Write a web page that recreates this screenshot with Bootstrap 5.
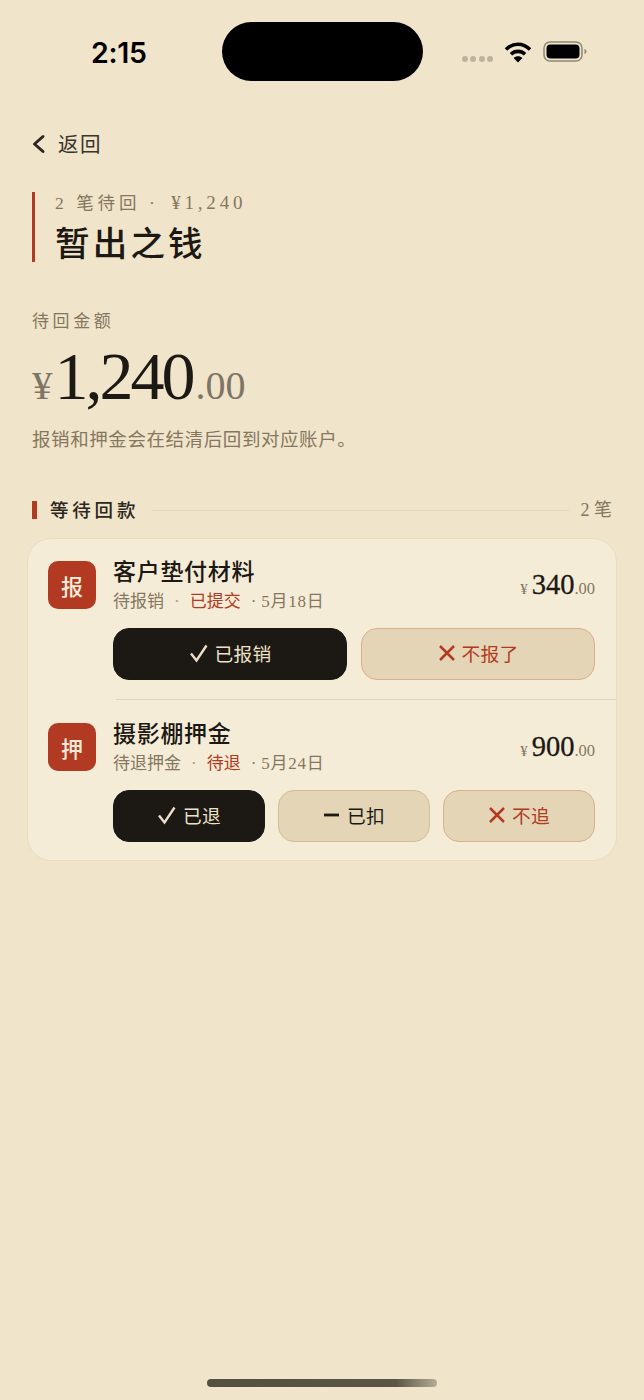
<!doctype html>
<html lang="zh">
<head>
<meta charset="utf-8">
<title>暂出之钱</title>
<link href="https://cdn.jsdelivr.net/npm/bootstrap@5.3.0/dist/css/bootstrap.min.css" rel="stylesheet">
<style>
:root{--cjk:"Noto Sans CJK SC",sans-serif;--ser:"Liberation Serif","Noto Sans CJK SC",serif;--ink:#1c1813;--mut:#7d7260;--red:#b23a22;}
html,body{background:#f0e4ca;}
body{width:644px;height:1400px;overflow:hidden;font-family:var(--cjk);color:var(--ink);position:relative;}
.sbar{height:82px;padding-top:22px;}
.clock{width:222px;padding-left:91px;font:600 28.5px/61px Inter,sans-serif;letter-spacing:-.3px;color:#000;}
.island{width:201px;height:59px;border-radius:30px;background:#000;}
.stat{margin-left:39px;gap:11px;padding-top:19px;}
.dots{gap:2.3px;padding-top:13px;}
.dots i{width:6px;height:6px;border-radius:50%;background:#bdb39d;display:block;}
.back{margin:37px 0 0 32px;height:49px;gap:12px;font-size:20.5px;letter-spacing:1.500px;color:#3a342a;}
.hero{margin:24px 0 0 32px;border-left:3px solid var(--red);padding-left:20px;height:70px;}
.eyebrow{font-family:var(--ser);font-size:17.5px;line-height:22px;letter-spacing:4px;color:#85775f;white-space:nowrap;}
.eyebrow .sum{font-size:19px;letter-spacing:3.800px;margin-left:4px;}
.ttl{font-size:34.5px;line-height:48px;font-weight:500;letter-spacing:3.200px;margin:3px 0 0;}
.lbl{margin:45px 0 0 32px;font-size:17px;line-height:26px;letter-spacing:3.600px;color:#85775f;}
.big{margin:7px 0 0 32px;height:72px;font-family:var(--ser);line-height:72px;white-space:nowrap;}
.big .yen{font-size:41px;color:#7d7566;margin-right:2px;}
.big .num{font-size:68px;letter-spacing:-3px;color:var(--ink);}
.big .dec{font-size:40px;color:#7d7566;margin-left:3px;}
.note{margin:12px 0 0 32px;font-size:18.5px;line-height:28px;letter-spacing:.58px;color:#85775f;}
.sect{margin:43px 32px 0 32px;height:30px;}
.sect .tick{width:5px;height:18px;background:var(--red);margin-right:13px;}
.sect .nm{font-size:18.5px;letter-spacing:3.800px;font-weight:500;color:#2c2720;}
.sect .rule{height:1px;background:#e4d8bd;margin:0 12px 0 13px;}
.sect .cnt{font-family:var(--ser);font-size:18px;color:#85775f;}
.panel{margin:13px 27px 0 27px;height:323px;background:#f5ecd7;border:1px solid #e8dcc2;border-radius:24px;}
.entry{padding:22px 21px 0 20px;height:160px;}
.glyph{width:48px;height:48px;border-radius:10px;background:var(--red);color:#f5ecd7;font-size:22px;font-weight:500;}
.bodyc{margin-left:17px;}
.nm2{font-size:23px;line-height:30px;letter-spacing:.7px;font-weight:500;margin-top:-6px;}
.meta{font-size:17px;line-height:26px;height:26px;color:#85775f;margin-top:2px;white-space:nowrap;}
.meta .st{color:var(--red);}
.meta .sep{font-family:var(--ser);margin:0 10px;color:#a89c85;}
.meta .dt{font-family:var(--ser);letter-spacing:.8px;margin-left:10px;}
.meta .dt b{font-weight:400;margin-right:4px;}
.amt{font-family:var(--ser);white-space:nowrap;margin-top:6px;line-height:36px;}
.amt .y{font-size:15px;color:#7d7566;margin-right:4px;}
.amt .n{font-size:28.5px;color:var(--ink);-webkit-text-stroke:.3px var(--ink);}
.amt .c{font-size:16.5px;color:#85775f;}
.acts{gap:14px;margin-top:15px;margin-left:65px;}
.acts.tri{gap:13px;}
.pbtn{flex:1 1 0;min-width:0;height:52px;padding:0 0 2px;border-radius:16px;font-size:18.7px;letter-spacing:.3px;gap:6px;display:flex;align-items:center;justify-content:center;}
.pbtn.fill{background:var(--ink);border:1px solid var(--ink);color:#ece1c8;}
.pbtn.soft{background:#e3d5b5;border:1px solid #cfbfa0;color:var(--ink);}
.pbtn.warn{background:#e3d5b5;border:1px solid #dcae8f;color:var(--red);}
.split{height:1px;background:#dfd3b9;margin:0 0 0 88px;}
.entry.two{height:161px;padding-top:23px;}
.home{width:230px;height:8px;border-radius:4px;background:linear-gradient(90deg,#54503f 0,#5a5545 82%,#b5ac96 100%);position:absolute;left:207px;top:1379px;}
</style>
</head>
<body>
<div class="sbar d-flex align-items-start">
  <div class="clock">2:15</div>
  <div class="island flex-shrink-0"></div>
  <div class="stat d-flex align-items-center">
    <div class="dots d-flex"><i></i><i></i><i></i><i></i></div>
    <svg width="28" height="22" viewBox="0 0 28 22" fill="none" stroke="#000" stroke-width="3.6"><path d="M2 8.5C9 1.5 19 1.500 26 8.5"/><path d="M7 13.200C11 9.400 17 9.400 21 13.200"/><path d="M14 21.500L9.600 17C12 14.700 16 14.700 18.400 17Z" fill="#000" stroke="none"/></svg>
    <svg width="44" height="22" viewBox="0 0 44 22"><rect x="1" y="1" width="38" height="19" rx="6" fill="none" stroke="#8e8775" stroke-width="1.500"/><rect x="3.500" y="3.500" width="33" height="14" rx="4" fill="#000"/><path d="M41.500 8v5c1.500-.5 2-1.500 2-2.500s-.5-2-2-2.500z" fill="#8e8775"/></svg>
  </div>
</div>
<div class="back d-flex align-items-center">
  <svg width="14" height="22" viewBox="0 0 14 22" fill="none" stroke="#2c2720" stroke-width="3" stroke-linecap="round" stroke-linejoin="round"><path d="M11 3.500L2.500 11l8.500 7.500"/></svg>
  <span>返回</span>
</div>
<div class="hero">
  <div class="eyebrow">2 笔待回 · <span class="sum">¥1,240</span></div>
  <h1 class="ttl">暂出之钱</h1>
</div>
<div class="lbl">待回金额</div>
<div class="big"><span class="yen">¥</span><span class="num">1,240</span><span class="dec">.00</span></div>
<div class="note">报销和押金会在结清后回到对应账户。</div>
<div class="sect d-flex align-items-center">
  <div class="tick"></div><div class="nm">等待回款</div><div class="rule flex-grow-1"></div><div class="cnt">2 笔</div>
</div>
<div class="panel">
  <div class="entry">
    <div class="d-flex">
      <div class="glyph d-flex align-items-center justify-content-center flex-shrink-0">报</div>
      <div class="bodyc flex-grow-1">
        <div class="nm2">客户垫付材料</div>
        <div class="meta">待报销<span class="sep">·</span><span class="st">已提交</span><span class="dt"><b>·</b>5月18日</span></div>
      </div>
      <div class="amt"><span class="y">¥</span><span class="n">340</span><span class="c">.00</span></div>
    </div>
    <div class="acts d-flex">
      <button class="btn pbtn fill"><svg width="20" height="20" viewBox="0 0 20 20" fill="none" stroke="#ece1c8" stroke-width="2.400"><path d="M2 10.500l5.500 7L17.500 2.500"/></svg>已报销</button>
      <button class="btn pbtn warn"><svg width="18" height="18" viewBox="0 0 18 18" fill="none" stroke="#b23a22" stroke-width="2.500"><path d="M2 2l14 14M16 2L2 16"/></svg>不报了</button>
    </div>
  </div>
  <div class="split"></div>
  <div class="entry two">
    <div class="d-flex">
      <div class="glyph d-flex align-items-center justify-content-center flex-shrink-0">押</div>
      <div class="bodyc flex-grow-1">
        <div class="nm2">摄影棚押金</div>
        <div class="meta">待退押金<span class="sep">·</span><span class="st">待退</span><span class="dt"><b>·</b>5月24日</span></div>
      </div>
      <div class="amt"><span class="y">¥</span><span class="n">900</span><span class="c">.00</span></div>
    </div>
    <div class="acts tri d-flex">
      <button class="btn pbtn fill"><svg width="20" height="20" viewBox="0 0 20 20" fill="none" stroke="#ece1c8" stroke-width="2.400"><path d="M2 10.500l5.500 7L17.500 2.500"/></svg>已退</button>
      <button class="btn pbtn soft"><svg width="18" height="18" viewBox="0 0 18 18" fill="none" stroke="#1c1813" stroke-width="2.800"><path d="M1 9h15"/></svg>已扣</button>
      <button class="btn pbtn warn"><svg width="18" height="18" viewBox="0 0 18 18" fill="none" stroke="#b23a22" stroke-width="2.500"><path d="M2 2l14 14M16 2L2 16"/></svg>不追</button>
    </div>
  </div>
</div>
<div class="home"></div>
</body>
</html>
